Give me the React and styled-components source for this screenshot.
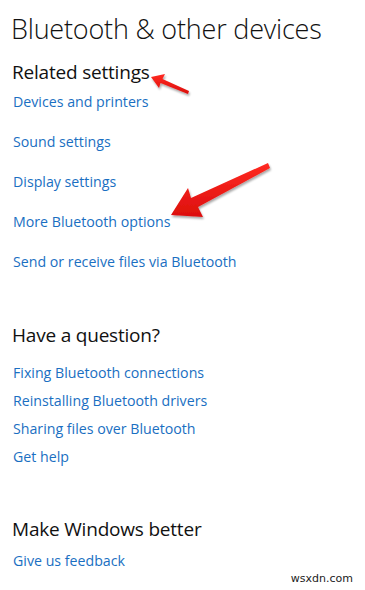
import React from "react";
import styled, { createGlobalStyle } from "styled-components";

const COLORS = {
  text: "#111111",
  link: "#1a6fc2",
  arrow: "#ee1c1c",
};

const GlobalStyle = createGlobalStyle`
  html, body {
    margin: 0;
    padding: 0;
    background: #ffffff;
  }
  body {
    font-family: "Open Sans", "Noto Sans", sans-serif;
    color: ${COLORS.text};
  }
`;

const Page = styled.div`
  position: relative;
  width: 365px;
  height: 590px;
  overflow: hidden;
  padding: 0 0 0 11px;
  box-sizing: border-box;
`;

const Title = styled.h1`
  margin: 0;
  padding-top: 11px;
  font-size: 27px;
  line-height: 36px;
  font-weight: 300;
  letter-spacing: -0.2px;
`;

const Section = styled.section`
  margin-top: ${({ top }) => top}px;
`;

const Heading = styled.h2`
  margin: 0 0 0 1px;
  font-size: 19px;
  line-height: 26px;
  font-weight: 400;
  letter-spacing: -0.2px;
`;

const LinkList = styled.ul`
  list-style: none;
  margin: ${({ first }) => first}px 0 0 0;
  padding: 0;
  display: flex;
  flex-direction: column;
  gap: ${({ gap }) => gap}px;
`;

const Link = styled.a`
  display: block;
  margin-left: 2px;
  font-size: 14.2px;
  line-height: 20px;
  color: ${COLORS.link};
  text-decoration: none;
`;

const Watermark = styled.span`
  position: absolute;
  right: 12px;
  bottom: 5px;
  font-family: "DejaVu Sans", sans-serif;
  font-size: 11px;
  color: #222;
`;

const ArrowLayer = styled.svg`
  position: absolute;
  left: 0;
  top: 0;
  pointer-events: none;
`;

const related = [
  "Devices and printers",
  "Sound settings",
  "Display settings",
  "More Bluetooth options",
  "Send or receive files via Bluetooth",
];

const questions = [
  "Fixing Bluetooth connections",
  "Reinstalling Bluetooth drivers",
  "Sharing files over Bluetooth",
  "Get help",
];

const Arrows = () => (
  <ArrowLayer width="365" height="590" viewBox="0 0 365 590">
    <defs>
      <linearGradient id="red" x1="0" y1="0" x2="0" y2="1">
        <stop offset="0" stopColor="#ff2a22" />
        <stop offset="1" stopColor="#dc0f0d" />
      </linearGradient>
      <filter id="shadow" x="-20%" y="-20%" width="140%" height="140%">
        <feGaussianBlur in="SourceAlpha" stdDeviation="1.2" />
        <feOffset dx="1" dy="2" result="b" />
        <feComponentTransfer>
          <feFuncA type="linear" slope="0.35" />
        </feComponentTransfer>
        <feMerge>
          <feMergeNode />
          <feMergeNode in="SourceGraphic" />
        </feMerge>
      </filter>
    </defs>
    {/* small arrow pointing at "Related settings" */}
    <polygon
      filter="url(#shadow)"
      fill="url(#red)"
      points="151,77 165,74 162.5,79 189,91 188,94 160.5,83 159,88"
    />
    {/* big arrow pointing at "More Bluetooth options" */}
    <polygon
      filter="url(#shadow)"
      fill="url(#red)"
      points="171,215 188,188 191,198 268,163 270,168 198,207 203,217"
    />
  </ArrowLayer>
);

export default function App() {
  return (
    <Page>
      <GlobalStyle />
      <Title>Bluetooth &amp; other devices</Title>
      <Section top={12}>
        <Heading>Related settings</Heading>
        <LinkList first={7} gap={20}>
          {related.map((t) => (
            <li key={t}>
              <Link href="#">{t}</Link>
            </li>
          ))}
        </LinkList>
      </Section>
      <Section top={50}>
        <Heading>Have a question?</Heading>
        <LinkList first={15} gap={8}>
          {questions.map((t) => (
            <li key={t}>
              <Link href="#">{t}</Link>
            </li>
          ))}
        </LinkList>
      </Section>
      <Section top={49}>
        <Heading>Make Windows better</Heading>
        <LinkList first={9} gap={8}>
          <li>
            <Link href="#">Give us feedback</Link>
          </li>
        </LinkList>
      </Section>
      <Arrows />
      <Watermark>wsxdn.com</Watermark>
    </Page>
  );
}
